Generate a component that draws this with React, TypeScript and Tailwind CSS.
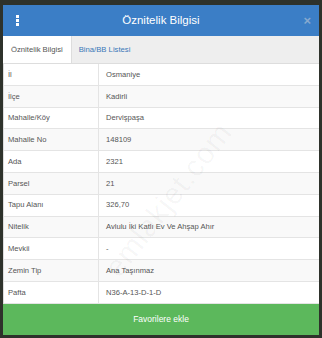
const rows: [string, string][] = [
  ["İl", "Osmaniye"],
  ["İlçe", "Kadirli"],
  ["Mahalle/Köy", "Dervişpaşa"],
  ["Mahalle No", "148109"],
  ["Ada", "2321"],
  ["Parsel", "21"],
  ["Tapu Alanı", "326,70"],
  ["Nitelik", "Avlulu İki Katlı Ev Ve Ahşap Ahır"],
  ["Mevkii", "-"],
  ["Zemin Tip", "Ana Taşınmaz"],
  ["Pafta", "N36-A-13-D-1-D"],
];

export default function App() {
  return (
    <div
      className="w-[322px] h-[338px] overflow-hidden bg-[#2e322b] pt-[5px] pl-[3px]"
      style={{ fontFamily: '"Liberation Sans", Arial, sans-serif' }}
    >
      <div className="relative w-[316px] bg-white">
        {/* header */}
        <div className="flex h-[31px] items-center justify-between bg-[#3b7ec6] pl-[13px] pr-[8px]">
          <div className="flex flex-col gap-[1.5px]">
            <span className="block h-[2.5px] w-[2.5px] bg-white" />
            <span className="block h-[2.5px] w-[2.5px] bg-white" />
            <span className="block h-[2.5px] w-[2.5px] bg-white" />
          </div>
          <span className="text-[11.5px] text-white">Öznitelik Bilgisi</span>
          <span className="text-[13px] font-bold leading-none text-[#86a9cf]">×</span>
        </div>

        {/* tabs */}
        <div className="flex h-[28px] items-end border-b border-[#dddddd] bg-[#eeeeee]">
          <div className="flex h-[27px] items-center border-r border-[#dddddd] bg-white px-[8px] text-[7.7px] text-[#555555]">
            Öznitelik Bilgisi
          </div>
          <div className="flex h-[27px] items-center px-[7px] text-[7.7px] text-[#3a78b8]">
            Bina/BB Listesi
          </div>
        </div>

        {/* table */}
        <div className="border-l border-[#dddddd]">
          {rows.map(([k, v], i) => (
            <div
              key={k}
              className={`flex h-[21.8px] items-center border-b border-[#e4e4e4] text-[7.6px] text-[#555555] ${
                i % 2 === 1 ? "bg-[#f9f9f9]" : "bg-white"
              }`}
            >
              <div className="flex h-full w-[95px] items-center border-r border-[#e4e4e4] pl-[4px]">
                {k}
              </div>
              <div className="pl-[7px]">{v}</div>
            </div>
          ))}
        </div>

        <button className="flex h-[31px] w-full items-center justify-center bg-[#5cb85c] text-[8.5px] text-white">
          Favorilere ekle
        </button>

        {/* watermark */}
        <div className="pointer-events-none absolute left-[72px] top-[172px] -rotate-[52deg] text-[30px] tracking-wide text-black/[0.04]">
          emlakjet.com
        </div>
      </div>
    </div>
  );
}
